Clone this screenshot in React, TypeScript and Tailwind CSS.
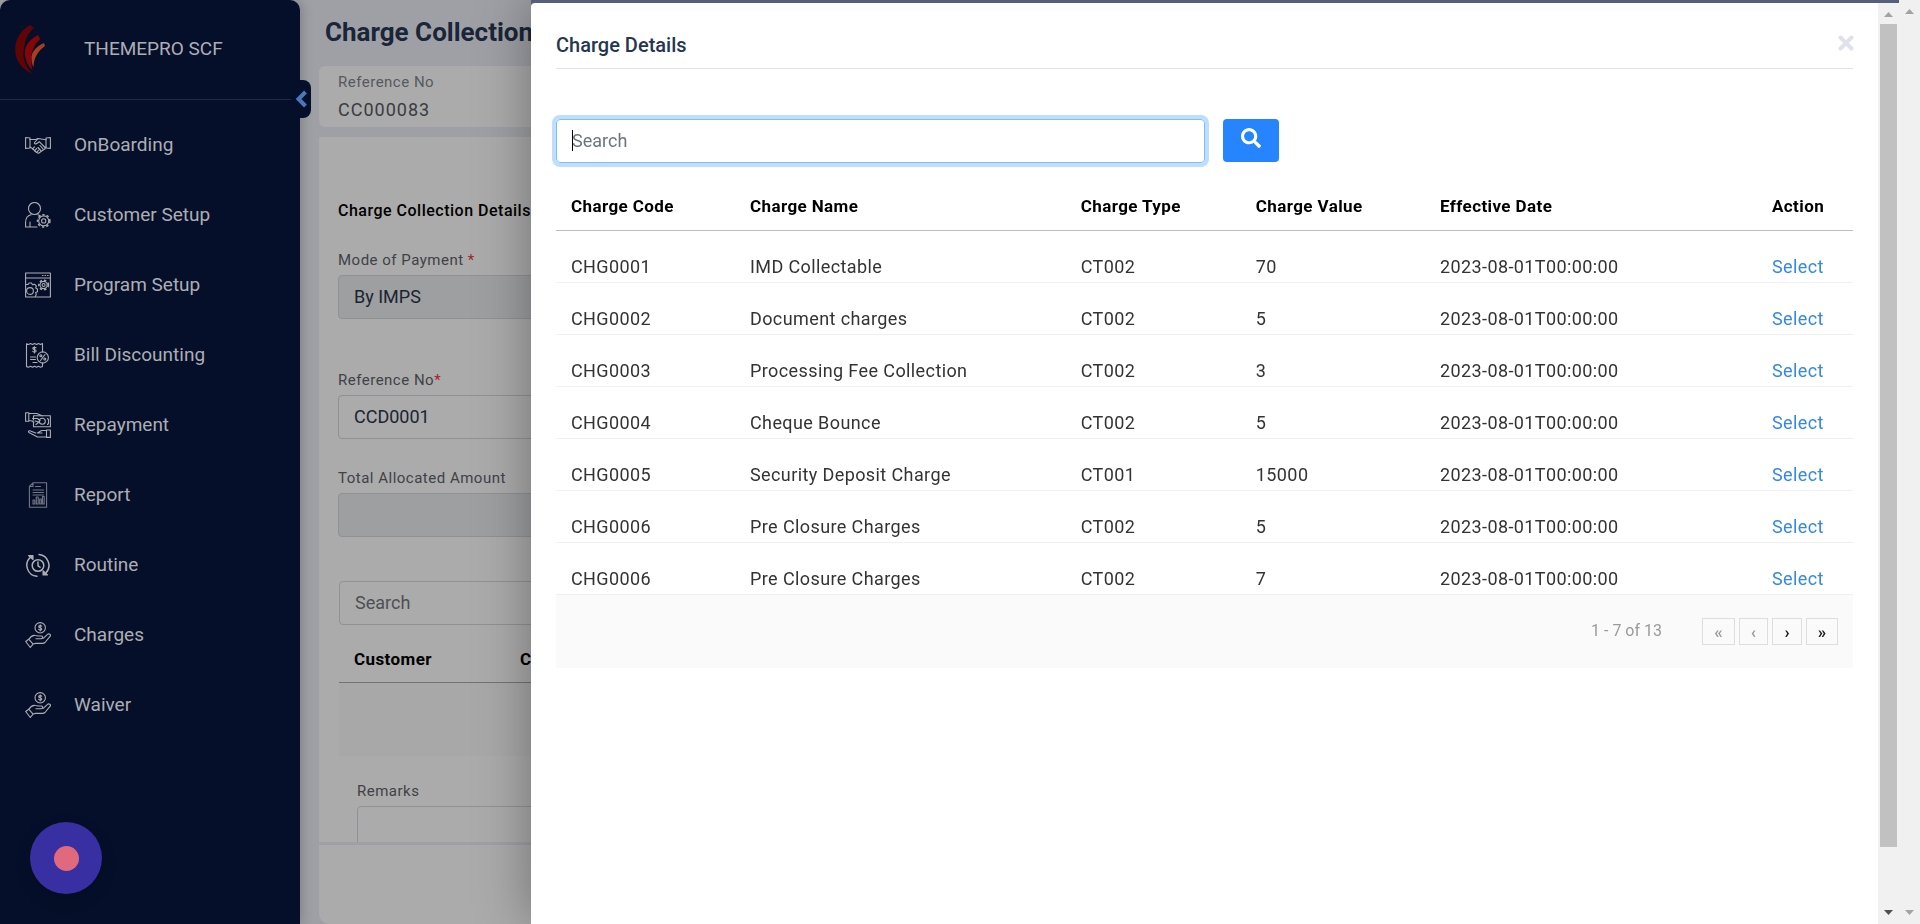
import React from "react";
import { FaSearch } from "react-icons/fa";

type Charge = { code: string; name: string; type: string; value: string };

const EFFECTIVE_DATE = "2023-08-01T00:00:00";

const charges: Charge[] = [
  { code: "CHG0001", name: "IMD Collectable", type: "CT002", value: "70" },
  { code: "CHG0002", name: "Document charges", type: "CT002", value: "5" },
  { code: "CHG0003", name: "Processing Fee Collection", type: "CT002", value: "3" },
  { code: "CHG0004", name: "Cheque Bounce", type: "CT002", value: "5" },
  { code: "CHG0005", name: "Security Deposit Charge", type: "CT001", value: "15000" },
  { code: "CHG0006", name: "Pre Closure Charges", type: "CT002", value: "5" },
  { code: "CHG0006", name: "Pre Closure Charges", type: "CT002", value: "7" },
];

function Icon({ children, className = "" }: { children: React.ReactNode; className?: string }) {
  return (
    <svg
      viewBox="0 0 26 26"
      className={`h-[26px] w-[26px] shrink-0 ${className}`}
      fill="none"
      stroke="currentColor"
      strokeWidth="1.1"
      strokeLinejoin="round"
      strokeLinecap="round"
      aria-hidden="true"
    >
      {children}
    </svg>
  );
}

function Gear({ cx, cy, r }: { cx: number; cy: number; r: number }) {
  return (
    <g>
      <circle cx={cx} cy={cy} r={r} />
      <circle cx={cx} cy={cy} r={r + 1.2} strokeWidth="1.5" strokeDasharray="2.3 2.2" strokeLinecap="butt" />
      <circle cx={cx} cy={cy} r={r * 0.42} />
    </g>
  );
}

const HandshakeIcon = () => (
  <Icon>
    <path d="M.6 5.5 5 6v10l-4.400.4zM25.400 5.500 21 6v10l4.400.4z" />
    <path d="M5 7.500h5.500l2.500-1 3 .5 5 .8M5 15l2.500 1.500 4 4 2 .8 6.500-4.500 1-2" />
    <path d="M13 6.500 9.500 10.500c-.5 1.500 1.500 2 3 .5l1.800-1.300L20 15.500" />
    <path d="m7.500 17 2-2.200M9.500 18.800l2.200-2.400M11.600 20.400l2-2.200M15 13.500l3 3.300M13 15.500l2.800 3" />
  </Icon>
);

const CustomerIcon = () => (
  <Icon>
    <circle cx="9.500" cy="6.500" r="6" />
    <path d="M12 25H.6v-4.500C.6 16 3 13.500 6 12.800M13 12.800l2.500 1.200M5 25v-5" />
    <Gear cx={18.7} cy={18.9} r={5} />
  </Icon>
);

const ProgramIcon = () => (
  <Icon>
    <rect x=".6" y="1" width="24.800" height="24" />
    <path d="M.6 6h24.800M17.500 3.500h.6M20 3.500h.6M22.500 3.500h.6" />
    <Gear cx={18.6} cy={13} r={3.6} />
    <circle cx="5" cy="19" r="3.400" />
    <path d="M1 12.500h2l1-1.500h2.500l1 1.800 2-.6 1.800 1.800-.6 2 1.800 1v2.800l-1.800.8.6 2-1 1.800" />
  </Icon>
);

const BillIcon = () => (
  <Icon>
    <path d="M17.500 10V1.500l-2 1-2-1-2 1-2-1-2 1-2-1-2 1-2-.7v22.800l2 .6 2-1 2 1 2-1 2 1 2-1 2 1 2-.7V21" />
    <path d="M11 5.800c-.8-.9-3.300-.8-3.200.6.100 1.600 3.300.8 3.300 2.500 0 1.500-2.600 1.500-3.400.4M9.400 4.500v6.500M5.500 15h5M5.500 17.500h5M8 20.500h4" />
    <circle cx="17.800" cy="15.500" r="5.600" />
    <path d="m15.500 18.500 4.500-6" />
    <circle cx="15.900" cy="13.800" r="1" />
    <circle cx="19.800" cy="17" r="1" />
  </Icon>
);

const RepaymentIcon = () => (
  <Icon>
    <path d="M.6.8h3.200v8.500H.6zM3.800 1.500h8L17 3.800M3.800 8.500l3.500.5 1.500 1.500" />
    <path d="M8.500 8V3.800h16.900v11H8.500V11" />
    <path d="M7.500 6.500h5l2.500 2-1 1.500-4-1M11 12.500l3-2.500M22.500 6.500l1 1v4l-1 1" />
    <circle cx="17.300" cy="9.300" r="3" />
    <path d="M21.500 18h3.900v7.400h-3.900zM21.500 18.500h-5l-4 2.500H17M21.500 25h-9L4 20.500c-1.200-.8-.4-2 .8-1.700l6 2.200" />
  </Icon>
);

const ReportIcon = () => (
  <Icon className="opacity-65">
    <path d="M8 .8h13.600v24.400H4.400V4.500zM8 .8v3.700H4.400M10.500 4.500h5M8 8h10.500M8 10.500h10.500M8 13h10.500" />
    <path d="M8 22v-4h1.800v4zM11.300 22v-7h1.900v7zM14.700 22v-5h1.600v5zM17.500 22v-7.500h1.700V22z" />
  </Icon>
);

const RoutineIcon = () => (
  <Icon>
    <g strokeWidth="1.500">
      <circle cx="13" cy="13.500" r="5.800" />
      <path d="M13 10v3.800l2 1.400" />
      <path d="M12 24.300A11 11 0 0 1 5.500 5.200M14 2.500a11 11 0 0 1 6.600 18.800" />
    </g>
    <path d="M3.500 3.500h4.500v4zM22.500 23H18v-4.300z" fill="currentColor" />
  </Icon>
);

const ChargeIcon = () => (
  <Icon>
    <circle cx="15.200" cy="5.800" r="5.200" />
    <path d="M16.700 4.200c-.6-.8-3-.8-3 .5 0 1.500 3.100.7 3.100 2.300 0 1.400-2.400 1.400-3.200.3M15.200 2.800v6.100" />
    <path d="m.7 19.500 3-2.300 4.400 5-2.800 3.300zM3.900 17.200c2-3 4-4.200 6.300-3.700l3 .5h3.200c1.800.2 1.700 2.500 0 2.700H11M16.500 16.500l2-.3 4-3.800c1.600-1.200 3.600.3 2.700 1.800l-5.200 6.300c-.8.8-1.600.9-2.700.9h-6.600L8 22" />
  </Icon>
);

const navItems: { label: string; icon: React.ReactNode }[] = [
  { label: "OnBoarding", icon: <HandshakeIcon /> },
  { label: "Customer Setup", icon: <CustomerIcon /> },
  { label: "Program Setup", icon: <ProgramIcon /> },
  { label: "Bill Discounting", icon: <BillIcon /> },
  { label: "Repayment", icon: <RepaymentIcon /> },
  { label: "Report", icon: <ReportIcon /> },
  { label: "Routine", icon: <RoutineIcon /> },
  { label: "Charges", icon: <ChargeIcon /> },
  { label: "Waiver", icon: <ChargeIcon /> },
];

function Logo() {
  return (
    <svg viewBox="0 0 30 50" className="h-[50px] w-[30px]" aria-hidden="true">
      <path d="M15 0C3 7-2 19 1 31c2.500 9 9 14 16 18C10 40 7 33 9 23 10.500 13 14 7 19 3z" fill="#5f0505" />
      <path d="M23 10C12 16 8 24 10.500 33c1.500 6 4 9.500 7 12-3-10-2-22 7.500-31z" fill="#850606" />
      <path d="M29 18c-9 4-13 10-12.500 16 .2 4 .8 6 2 8 .5-9 3.500-15 11.500-21z" fill="#a63e22" />
    </svg>
  );
}

function Sidebar() {
  return (
    <aside className="relative z-10 flex w-[300px] shrink-0 flex-col rounded-t-[10px] bg-[#050f29] text-[#acaeb4] shadow-[2px_0_12px_rgba(0,0,0,0.2)]">
      <div className="mr-[6px] flex h-[100px] items-center border-b border-[#1f2a45] pl-[15px]">
        <Logo />
        <span className="pl-[39px] text-[19px]">THEMEPRO SCF</span>
      </div>
      <button
        type="button"
        aria-label="Collapse menu"
        className="absolute top-[80px] -right-[11px] flex h-[38px] w-[20px] items-center justify-center rounded-r-[8px] bg-[#050f29]"
      >
        <svg viewBox="0 0 12 18" className="h-[18px] w-[12px]" fill="none" stroke="#4a77b8" strokeWidth="4" aria-hidden="true">
          <path d="M10.500 2 3.500 9l7 7" />
        </svg>
      </button>
      <nav className="pt-[10px]">
        {navItems.map((item) => (
          <a key={item.label} href="#" className="flex h-[70px] items-center gap-[23px] pl-[25px] text-[19px]">
            {item.icon}
            <span>{item.label}</span>
          </a>
        ))}
      </nav>
      <button
        type="button"
        aria-label="Record"
        className="mt-auto mb-[30px] ml-[30px] flex h-[72px] w-[72px] items-center justify-center rounded-full bg-[#382fa3] shadow-[0_6px_16px_rgba(0,0,0,0.15)]"
      >
        <span className="h-[25px] w-[25px] rounded-full bg-[#e0697d]" />
      </button>
    </aside>
  );
}

const labelClass = "block text-[15px] leading-[20px] tracking-[0.5px] text-[#3f4246]";
const fieldClass = "block h-[44px] w-full rounded-[4px] border border-[#8f9194] px-[15px] pb-[2px] text-[18px]";

function ChargeCollection() {
  return (
    <main className="flex min-w-0 flex-1 flex-col bg-[#9fa0a5] pl-[19px]">
      <h1 className="pt-[15px] pl-[6px] text-[26px] leading-[34px] font-bold text-[#1a2539]">Charge Collection</h1>
      <section className="mt-[17px] h-[61px] rounded-[6px] bg-[#ababab] pt-[6px] pl-[19px]">
        <div className="text-[15px] leading-[20px] tracking-[0.5px] text-[#56595e]">Reference No</div>
        <div className="pt-[6px] text-[18px] leading-[24px] tracking-[1px] text-[#3a3c3f]">CC000083</div>
      </section>
      <form className="mt-[10px] h-[705px] overflow-hidden bg-[#ababab] pl-[19px]" onSubmit={(e) => e.preventDefault()}>
        <h2 className="pt-[64px] text-[16px] leading-[20px] font-medium tracking-[0.5px] text-black">Charge Collection Details</h2>
        <div className="pt-[29px]">
          <label htmlFor="mode" className={labelClass}>
            Mode of Payment <span className="text-[#a31f2c]">*</span>
          </label>
          <input id="mode" readOnly defaultValue="By IMPS" className={`mt-[5px] bg-[#9d9fa1] text-[#1b2431] ${fieldClass}`} />
        </div>
        <div className="pt-[51px]">
          <label htmlFor="refno" className={labelClass}>
            Reference No<span className="text-[#a31f2c]">*</span>
          </label>
          <input id="refno" defaultValue="CCD0001" className={`mt-[5px] text-[#1b2431] ${fieldClass}`} />
        </div>
        <div className="pt-[29px]">
          <label htmlFor="total" className={labelClass}>
            Total Allocated Amount
          </label>
          <input id="total" readOnly className={`mt-[5px] bg-[#9d9fa1] ${fieldClass}`} />
        </div>
        <div className="pt-[44px] pl-px">
          <input aria-label="Search customers" placeholder="Search" className={`placeholder:text-[#4d5053] ${fieldClass}`} />
          <table className="w-full table-fixed text-left">
            <thead>
              <tr className="h-[57px] border-b border-[#737373] text-[17px] tracking-[0.4px] text-black">
                <th className="w-[166px] pt-[12px] pl-[15px] font-bold">Customer</th>
                <th className="pt-[12px] pl-[15px] font-bold">Charge</th>
              </tr>
            </thead>
            <tbody>
              <tr className="h-[74px] bg-[#a8a8a8]">
                <td colSpan={2} />
              </tr>
            </tbody>
          </table>
        </div>
        <div className="pt-[25px] pl-[19px]">
          <label htmlFor="remarks" className={labelClass}>
            Remarks
          </label>
          <textarea id="remarks" className="mt-[5px] block h-[90px] w-full rounded-[4px] border border-[#8f9194]" />
        </div>
      </form>
      <footer className="mt-[3px] flex-1 rounded-bl-[10px] bg-[#ababab]" />
    </main>
  );
}

function Arrow({ down = false, dark = false }: { down?: boolean; dark?: boolean }) {
  return (
    <svg viewBox="0 0 9 5" className={`h-[5px] w-[9px] ${dark ? "text-[#505050]" : "text-[#a3a3a3]"}`} fill="currentColor" aria-hidden="true">
      <path d={down ? "M0 0h9L4.500 5z" : "M0 5h9L4.500 0z"} />
    </svg>
  );
}

const pagerButton = "flex h-[27px] items-center justify-center border border-[#dedede] pt-[3px] text-[17px] leading-none font-bold";

function ChargeDialog() {
  return (
    <div role="dialog" aria-label="Charge Details" className="fixed inset-y-0 right-[21px] left-[531px] z-20 flex bg-[#566079] shadow-[0_0_50px_rgba(0,0,0,0.35)]">
      <div className="mt-[3px] min-w-0 flex-1 rounded-tl-[4px] bg-white pr-[25px] pl-[25px]">
        <header className="flex h-[66px] items-center justify-between border-b border-[#e2e3e6] pt-[19px]">
          <h2 className="text-[20px] leading-[28px] font-medium text-[#263650]">Charge Details</h2>
          <button type="button" aria-label="Close" className="-mt-[4px] -mr-px">
            <svg viewBox="0 0 16 16" className="h-[16px] w-[16px]" stroke="#dfe2e8" strokeWidth="4" strokeLinecap="round" aria-hidden="true">
              <path d="m2.500 2.500 11 11M13.500 2.500l-11 11" />
            </svg>
          </button>
        </header>
        <form className="flex items-start gap-[18px] pt-[50px]" onSubmit={(e) => e.preventDefault()}>
          <div className="relative w-1/2">
            <input
              aria-label="Search"
              placeholder="Search"
              className="block h-[44px] w-full rounded-[4px] border border-[#80bdff] px-[15px] pb-[2px] text-[18px] shadow-[0_0_0_4px_#bfdeff] outline-none placeholder:text-[#6c757d]"
            />
            <span className="absolute top-[11px] left-[16px] h-[21px] w-px bg-black" />
          </div>
          <button type="submit" aria-label="Run search" className="flex h-[43px] w-[56px] items-center justify-center rounded-[4px] bg-[#2684ff] pb-[5px] text-white">
            <FaSearch className="h-[20px] w-[20px]" />
          </button>
        </form>
        <table className="mt-[15px] w-full table-fixed text-left">
          <thead>
            <tr className="h-[52px] border-b border-[#bdbdbd] text-[17px] tracking-[0.4px] text-black [&>th]:pt-[6px] [&>th]:pl-[15px] [&>th]:font-bold">
              <th className="w-[13.8%]">Charge Code</th>
              <th className="w-[25.5%]">Charge Name</th>
              <th className="w-[13.5%]">Charge Type</th>
              <th className="w-[14.2%]">Charge Value</th>
              <th className="w-[25.6%]">Effective Date</th>
              <th>Action</th>
            </tr>
          </thead>
          <tbody>
            {charges.map((c, i) => (
              <tr key={i} className="h-[52px] border-b border-[#f0f0f0] text-[18px] tracking-[0.4px] text-[#333333] [&>td]:pt-[20px] [&>td]:pl-[15px]">
                <td>{c.code}</td>
                <td>{c.name}</td>
                <td>{c.type}</td>
                <td>{c.value}</td>
                <td>{EFFECTIVE_DATE}</td>
                <td>
                  <a href="#" className="text-[#3388e8]">
                    Select
                  </a>
                </td>
              </tr>
            ))}
          </tbody>
        </table>
        <div className="flex h-[73px] items-center justify-end gap-[4px] bg-[#fafafa] pr-[15px]">
          <span className="mr-[36px] text-[16px] text-[#9a9a9a]">1 - 7 of 13</span>
          <button type="button" disabled aria-label="First page" className={`w-[33px] text-[#9a9da1] ${pagerButton}`}>«</button>
          <button type="button" disabled aria-label="Previous page" className={`w-[29px] text-[#9a9da1] ${pagerButton}`}>‹</button>
          <button type="button" aria-label="Next page" className={`w-[30px] text-[#212121] ${pagerButton}`}>›</button>
          <button type="button" aria-label="Last page" className={`w-[32px] text-[#212121] ${pagerButton}`}>»</button>
        </div>
      </div>
      <div className="mt-[3px] flex w-[21px] flex-col items-center bg-[#f1f1f1] py-[9px]">
        <Arrow />
        <div className="mt-[7px] w-[17px] flex-1 bg-[#c1c1c1]" />
        <div className="h-[63px]" />
        <Arrow down dark />
      </div>
    </div>
  );
}

export default function App() {
  return (
    <div className="flex min-h-screen bg-[#9fa0a5] font-[Roboto,sans-serif]">
      <Sidebar />
      <ChargeCollection />
      <div className="relative z-30 flex w-[21px] shrink-0 flex-col items-center justify-between bg-[#f0f0f0] py-[9px]">
        <Arrow />
        <Arrow down />
      </div>
      <ChargeDialog />
    </div>
  );
}
